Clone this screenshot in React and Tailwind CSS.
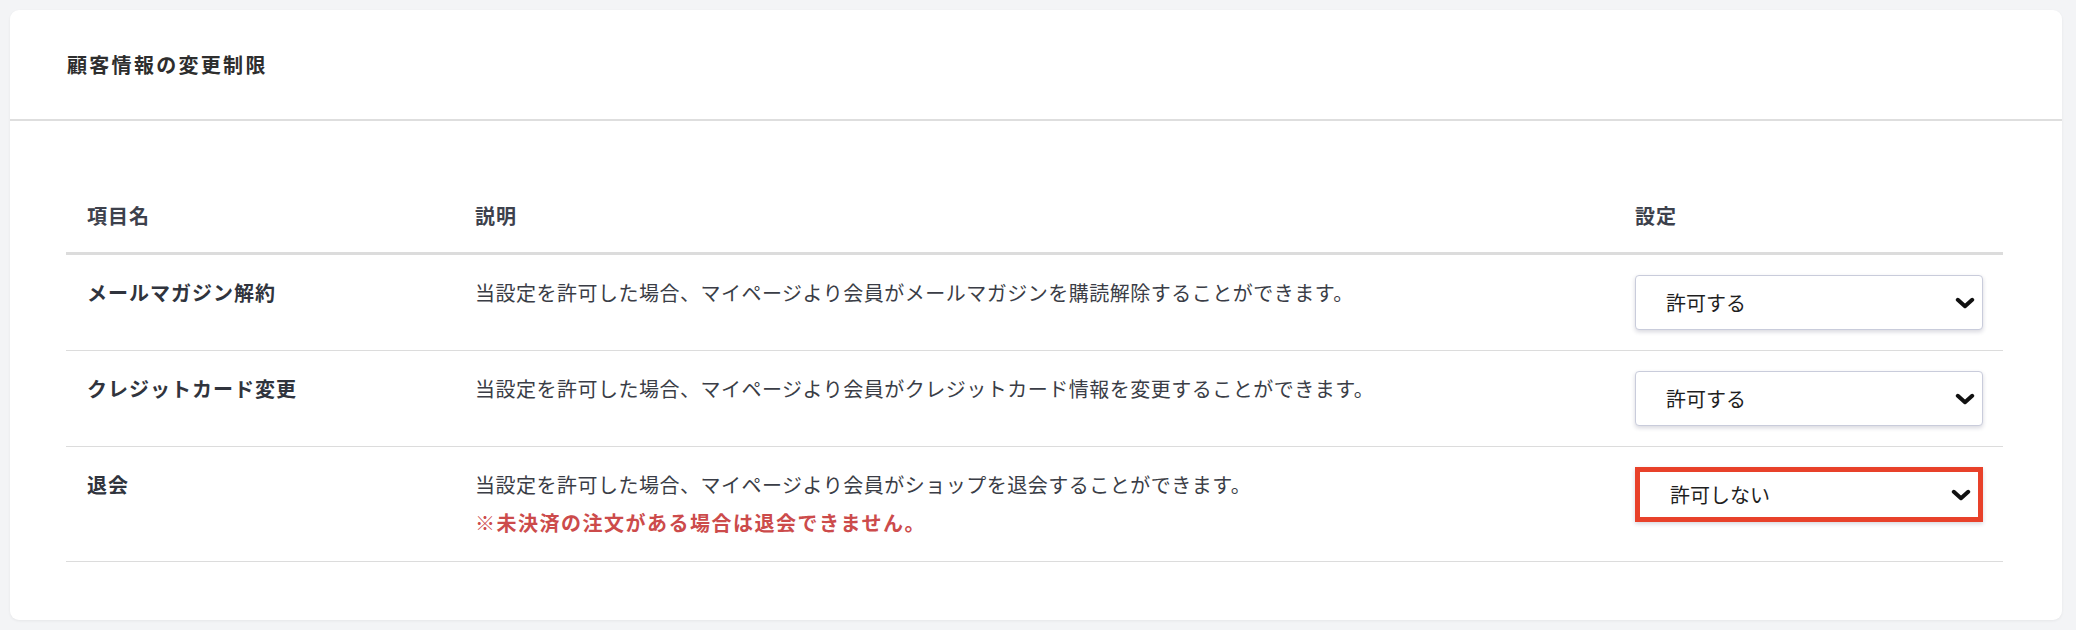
import React from "react";

const rows = [
  {
    name: "メールマガジン解約",
    desc: "当設定を許可した場合、マイページより会員がメールマガジンを購読解除することができます。",
    value: "許可する",
  },
  {
    name: "クレジットカード変更",
    desc: "当設定を許可した場合、マイページより会員がクレジットカード情報を変更することができます。",
    value: "許可する",
  },
  {
    name: "退会",
    desc: "当設定を許可した場合、マイページより会員がショップを退会することができます。",
    note: "※未決済の注文がある場合は退会できません。",
    value: "許可しない",
    highlight: true,
  },
];

const Chevron = () => (
  <svg width="20" height="12" viewBox="0 0 20 12" className="shrink-0">
    <path d="M2.8 2.8 L10 9.2 L17.2 2.8" fill="none" stroke="#111" strokeWidth="4" strokeLinecap="round" strokeLinejoin="round" />
  </svg>
);

const Select = ({ value, highlight }) => (
  <div
    className={`flex items-center justify-between h-[55px] w-[348px] rounded-[4px] bg-white pl-[30px] pr-[7px] shadow-[0_2px_4px_rgba(40,40,80,0.18)] ${
      highlight ? "border-[5px] border-[#e8412a] rounded-none pl-[26px] pr-[3px]" : "border border-[#c9ccdb]"
    }`}
  >
    <span className="text-[20px] text-[#1f1f1f]">{value}</span>
    <Chevron />
  </div>
);

export default function App() {
  return (
    <div
      className="min-h-[630px] bg-[#f3f4f6] pt-[10px] pl-[10px] pr-[14px] pb-[8px]"
      style={{ fontFamily: '"Noto Sans CJK JP", "Noto Sans", sans-serif' }}
    >
      <div className="bg-white rounded-[9px] shadow-[0_1px_3px_rgba(0,0,0,0.06)]">
        <div className="h-[111px] flex items-center px-[57px] border-b-2 border-[#dedede]">
          <h2 className="text-[20px] font-bold text-[#2e2e2e] tracking-[2.3px]">顧客情報の変更制限</h2>
        </div>
        <div className="pl-[56px] pr-[59px] pt-[60px] pb-[58px]">
          <table className="w-full border-collapse text-left">
            <thead>
              <tr className="border-b-[3px] border-[#dcdcdc]">
                <th className="w-[388px] pl-[21px] pt-[17px] pb-[18px] text-[20px] leading-[36px] font-bold text-[#3d414c] tracking-[1px]">項目名</th>
                <th className="pl-[21px] pt-[17px] pb-[18px] text-[20px] leading-[36px] font-bold text-[#3d414c] tracking-[1px]">説明</th>
                <th className="w-[389px] pl-[21px] pt-[17px] pb-[18px] text-[20px] leading-[36px] font-bold text-[#3d414c] tracking-[1px]">設定</th>
              </tr>
            </thead>
            <tbody>
              {rows.map((r) => (
                <tr key={r.name} className="border-b border-[#dcdcdc] align-top">
                  <td className="pl-[21px] py-[20px] text-[20px] leading-[36px] font-bold text-[#30343d] tracking-[1px]">{r.name}</td>
                  <td className="pl-[21px] py-[20px] text-[20px] leading-[36px] text-[#3a3d46] tracking-[0.5px]">
                    <p>{r.desc}</p>
                    {r.note && <p className="mt-[2px] font-bold text-[#cc4b4b] tracking-[1.5px]">{r.note}</p>}
                  </td>
                  <td className="pl-[21px] pr-[20px] py-[20px]">
                    <Select value={r.value} highlight={r.highlight} />
                  </td>
                </tr>
              ))}
            </tbody>
          </table>
        </div>
      </div>
    </div>
  );
}
